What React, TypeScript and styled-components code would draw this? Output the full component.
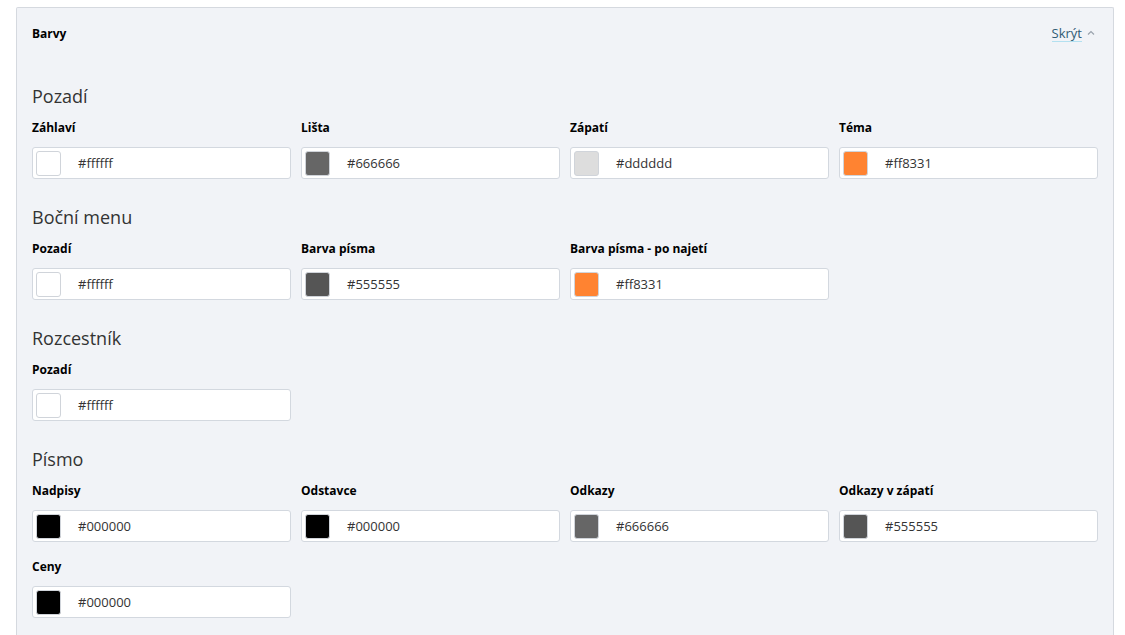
import React from 'react'
import styled, { createGlobalStyle } from 'styled-components'

const GlobalStyle = createGlobalStyle`
  html, body {
    margin: 0;
    background: #ffffff;
    font-family: "Open Sans", "Noto Sans", sans-serif;
    color: #000;
  }
  body {
    padding: 7px 11px 0 16px;
  }
`

const Panel = styled.section`
  background: #f1f3f7;
  border: 1px solid #d5d9df;
  border-bottom: none;
  border-radius: 2px 2px 0 0;
  padding: 0 15px 14px 15px;
  min-height: 640px;
  box-sizing: border-box;
`

const PanelHeader = styled.header`
  display: flex;
  align-items: center;
  justify-content: space-between;
  height: 50px;
  margin-bottom: 26px;

  h2 {
    margin: 0;
    font-size: 12px;
    font-weight: 700;
  }
`

const Toggle = styled.a`
  display: flex;
  align-items: center;
  gap: 5px;
  font-size: 13px;
  color: #2f5b74;
  text-decoration: none;
  margin-right: 3px;

  span {
    border-bottom: 1px solid #b3e0f0;
    line-height: 16px;
  }

  svg {
    display: block;
  }
`

const Group = styled.div`
  & + & {
    margin-top: 26px;
  }
`

const GroupTitle = styled.h3`
  margin: 0 0 12px 0;
  font-size: 18px;
  font-weight: 400;
  line-height: 24px;
  color: #333;
`

const Grid = styled.div`
  display: grid;
  grid-template-columns: repeat(4, 1fr);
  column-gap: 10px;
  row-gap: 17px;
`

const Field = styled.div`
  display: flex;
  flex-direction: column;
  gap: 11px;
`

const Label = styled.label`
  font-size: 12px;
  font-weight: 700;
  line-height: 16px;
`

const ColorInput = styled.div`
  display: flex;
  align-items: center;
  gap: 17px;
  height: 32px;
  box-sizing: border-box;
  background: #fff;
  border: 1px solid #d3d8df;
  border-radius: 3px;
  padding: 0 3px;
  font-size: 13px;
  color: #333;
`

const Swatch = styled.span<{ $color: string }>`
  width: 25px;
  height: 25px;
  box-sizing: border-box;
  border-radius: 3px;
  border: 1px solid #d0d4da;
  background: ${p => p.$color};
`

type Item = { label: string; value: string }

const groups: { title: string; items: Item[] }[] = [
  {
    title: 'Pozadí',
    items: [
      { label: 'Záhlaví', value: '#ffffff' },
      { label: 'Lišta', value: '#666666' },
      { label: 'Zápatí', value: '#dddddd' },
      { label: 'Téma', value: '#ff8331' },
    ],
  },
  {
    title: 'Boční menu',
    items: [
      { label: 'Pozadí', value: '#ffffff' },
      { label: 'Barva písma', value: '#555555' },
      { label: 'Barva písma - po najetí', value: '#ff8331' },
    ],
  },
  {
    title: 'Rozcestník',
    items: [{ label: 'Pozadí', value: '#ffffff' }],
  },
  {
    title: 'Písmo',
    items: [
      { label: 'Nadpisy', value: '#000000' },
      { label: 'Odstavce', value: '#000000' },
      { label: 'Odkazy', value: '#666666' },
      { label: 'Odkazy v zápatí', value: '#555555' },
      { label: 'Ceny', value: '#000000' },
    ],
  },
]

export default function App() {
  return (
    <>
      <GlobalStyle />
      <Panel>
        <PanelHeader>
          <h2>Barvy</h2>
          <Toggle href="#">
            <span>Skrýt</span>
            <svg width="8" height="6" viewBox="0 0 8 6">
              <polyline points="1,4.5 4,1.5 7,4.5" fill="none" stroke="#9aa3ad" strokeWidth="1.2" />
            </svg>
          </Toggle>
        </PanelHeader>
        {groups.map(g => (
          <Group key={g.title}>
            <GroupTitle>{g.title}</GroupTitle>
            <Grid>
              {g.items.map(it => (
                <Field key={it.label}>
                  <Label>{it.label}</Label>
                  <ColorInput>
                    <Swatch $color={it.value} />
                    {it.value}
                  </ColorInput>
                </Field>
              ))}
            </Grid>
          </Group>
        ))}
      </Panel>
    </>
  )
}
